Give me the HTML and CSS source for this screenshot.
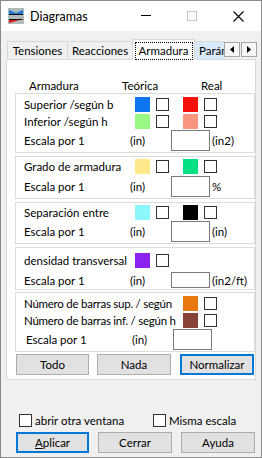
FILE: index.html
```html
<!DOCTYPE html>
<html lang="es">
<head>
  <meta charset="UTF-8"/>
  <title>Diagramas</title>
  <link rel="stylesheet" href="styles.css">
</head>
<body>

  <div class="window">
    <div class="titlebar">
      <svg class="app-icon" width="16" height="16" viewBox="0 0 16 16">
        <rect width="16" height="16" fill="#b1babb"/>
        <path d="M1 2 L8 5 L15 2 L15 6 L1 6 Z" fill="#1f7ad8"/>
        <rect x="1" y="6" width="14" height="1" fill="#111"/>
        <rect x="1" y="11" width="14" height="1" fill="#111"/>
        <path d="M1 12 L12 12 L1 15 Z" fill="#e3191b"/>
        <path d="M13 12 L15 12 L15 11 Z" fill="#e3191b"/>
      </svg>
      <span class="title">Diagramas</span>
      <div class="caption-buttons">
        <span class="cap-btn">
          <svg width="10" height="10" viewBox="0 0 10 10"><rect x="0" y="4" width="10" height="1" fill="#000"/></svg>
        </span>
        <span class="cap-btn">
          <svg width="10" height="10" viewBox="0 0 10 10"><rect x="0.5" y="0.5" width="9" height="9" fill="none" stroke="#c4c4c4"/></svg>
        </span>
        <span class="cap-btn">
          <svg width="11" height="11" viewBox="0 0 11 11"><path d="M0.5 0.5 L10.5 10.5 M10.5 0.5 L0.5 10.5" stroke="#000" stroke-width="1.1"/></svg>
        </span>
      </div>
    </div>

    <div class="client">
      <div class="tabstrip">
        <div class="tabs">
          <div class="tab tab-1">Tensiones</div>
          <div class="tab tab-2">Reacciones</div>
          <div class="tab tab-active"><span class="focus">Armadura</span></div>
          <div class="tab tab-hover">Parámetros</div>
        </div>
        <div class="tab-scroller">
          <span class="scroll-btn">
            <svg width="4" height="7" viewBox="0 0 4 7"><path d="M4 0 L0 3.5 L4 7 Z" fill="#000"/></svg>
          </span>
          <span class="scroll-btn">
            <svg width="4" height="7" viewBox="0 0 4 7"><path d="M0 0 L4 3.5 L0 7 Z" fill="#000"/></svg>
          </span>
        </div>
      </div>

      <div class="panel">
        <div class="panel-head">
          <span>Armadura</span>
          <span>Teórica</span>
          <span>Real</span>
        </div>

        <div class="group group-1">
          <div class="row">
            <span class="label">Superior /según b</span>
            <span class="swatch" style="background:#0b76ef"></span>
            <span class="check"></span>
            <span class="swatch swatch-real" style="background:#f5100c"></span>
            <span class="check"></span>
          </div>
          <div class="row">
            <span class="label">Inferior /según h</span>
            <span class="swatch" style="background:#98f883"></span>
            <span class="check"></span>
            <span class="swatch swatch-real" style="background:#f8957e"></span>
            <span class="check"></span>
          </div>
          <div class="scale-row">
            <span class="scale-label">Escala por 1</span>
            <span class="scale-in">(in)</span>
            <span class="field"></span>
            <span class="unit">(in2)</span>
          </div>
        </div>

        <div class="group group-2">
          <div class="row">
            <span class="label">Grado de armadura</span>
            <span class="swatch" style="background:#fde88e"></span>
            <span class="check"></span>
            <span class="swatch swatch-real" style="background:#04e185"></span>
            <span class="check"></span>
          </div>
          <div class="scale-row">
            <span class="scale-label">Escala por 1</span>
            <span class="scale-in">(in)</span>
            <span class="field"></span>
            <span class="unit">%</span>
          </div>
        </div>

        <div class="group group-3">
          <div class="row">
            <span class="label">Separación entre</span>
            <span class="swatch" style="background:#8cf8fd"></span>
            <span class="check"></span>
            <span class="swatch swatch-real" style="background:#000"></span>
            <span class="check"></span>
          </div>
          <div class="scale-row">
            <span class="scale-label">Escala por 1</span>
            <span class="scale-in">(in)</span>
            <span class="field"></span>
            <span class="unit">(in)</span>
          </div>
        </div>

        <div class="group group-4">
          <div class="row">
            <span class="label">densidad transversal</span>
            <span class="swatch" style="background:#8a22f0"></span>
            <span class="check"></span>
          </div>
          <div class="scale-row">
            <span class="scale-label">Escala por 1</span>
            <span class="scale-in">(in)</span>
            <span class="field"></span>
            <span class="unit">(in2/ft)</span>
          </div>
        </div>

        <div class="group group-5">
          <div class="row">
            <span class="label label-wide">Número de barras sup. / según</span>
            <span class="swatch" style="background:#e8790f"></span>
            <span class="check"></span>
          </div>
          <div class="row">
            <span class="label label-wide">Número de barras inf. / según h</span>
            <span class="swatch" style="background:#874335"></span>
            <span class="check"></span>
          </div>
          <div class="scale-row">
            <span class="scale-label">Escala por 1</span>
            <span class="scale-in">(in)</span>
            <span class="field"></span>
          </div>
        </div>

        <div class="panel-buttons">
          <button class="btn">Todo</button>
          <button class="btn">Nada</button>
          <button class="btn btn-default">Normalizar</button>
        </div>
      </div>

      <div class="options">
        <label class="option"><span class="check"></span>abrir otra ventana</label>
        <label class="option"><span class="check"></span>Misma escala</label>
      </div>

      <div class="actions">
        <button class="btn btn-default"><u>A</u>plicar</button>
        <button class="btn">Cerrar</button>
        <button class="btn">Ayuda</button>
      </div>
    </div>
  </div>

</body>
</html>
```

FILE: styles.css
```css
* {
  box-sizing: border-box;
}

body {
  margin: 0;
  font-family: Lato, "Noto Sans", sans-serif;
  font-size: 11.5px;
  color: #000;
}

.window {
  width: 262px;
  height: 458px;
  border: 1px solid #8a8a8a;
  background: #f0f0f0;
  display: flex;
  flex-direction: column;
}

/* title bar */
.titlebar {
  height: 30px;
  flex-shrink: 0;
  background: #fff;
  display: flex;
  align-items: center;
  padding-left: 7px;
}

.app-icon {
  display: block;
}

.title {
  margin-left: 6px;
  font-size: 12.5px;
}

.caption-buttons {
  margin-left: auto;
  display: flex;
}

.cap-btn {
  width: 46px;
  height: 30px;
  display: flex;
  align-items: center;
  justify-content: center;
}

.cap-btn svg {
  display: block;
}

/* client area */
.client {
  flex: 1;
  display: flex;
  flex-direction: column;
  padding: 8px 5px 4px 5px;
}

.tabstrip {
  position: relative;
  z-index: 1;
  height: 21px;
  margin-bottom: -1px;
}

.tabs {
  width: 219px;
  height: 21px;
  display: flex;
  align-items: flex-end;
  overflow: hidden;
}

.tab {
  flex-shrink: 0;
  height: 18px;
  margin-bottom: 1px;
  margin-left: -1px;
  border: 1px solid #d9d9d9;
  border-bottom: none;
  background: #f0f0f0;
  display: flex;
  align-items: center;
  justify-content: center;
}

.tab-1 {
  width: 61px;
  margin-left: 1px;
}

.tab-2 {
  width: 66px;
}

.tab-active {
  width: 63px;
  height: 21px;
  margin-bottom: 0;
  background: #fff;
}

.focus {
  width: 58px;
  height: 18px;
  margin-top: 1px;
  border: 1px dotted #000;
  display: flex;
  align-items: center;
  justify-content: center;
}

.tab-hover {
  width: 60px;
  justify-content: flex-start;
  padding-left: 4px;
  background: #d8eaf9;
}

.tab-scroller {
  position: absolute;
  left: 218px;
  top: 3px;
  display: flex;
  gap: 1px;
}

.scroll-btn {
  width: 16px;
  height: 15px;
  border: 1px solid #a6a6a6;
  background: #f6f6f6;
  display: flex;
  align-items: center;
  justify-content: center;
}

.scroll-btn svg {
  display: block;
}

/* tab page */
.panel {
  border: 1px solid #d9d9d9;
  background: #fff;
  padding: 0 0 4px 8px;
}

.panel-head {
  height: 33px;
  padding: 19px 0 0 14px;
  display: grid;
  grid-template-columns: 93px 79px auto;
  line-height: 14px;
}

.group {
  border: 1px solid #dcdcdc;
  margin-bottom: 3px;
  padding-left: 8px;
}

.group-1 {
  padding-top: 2px;
  padding-bottom: 1px;
}

.group-2 {
  padding-top: 1px;
  padding-bottom: 1px;
}

.group-2 .scale-row {
  margin-top: 1px;
}

.group-3 {
  padding-top: 1px;
  padding-bottom: 1px;
}

.group-4 {
  padding-top: 4px;
  padding-bottom: 1px;
  margin-bottom: 2px;
}

.group-4 .scale-row {
  height: 16px;
  margin-top: 3px;
}

.group-4 .field {
  height: 16px;
}

.group-5 {
  padding-top: 2px;
  padding-bottom: 1px;
  margin-bottom: 2px;
}

.group-5 .scale-row {
  padding-left: 2px;
}

.row {
  height: 17px;
  display: flex;
  align-items: center;
  white-space: nowrap;
}

.label {
  width: 111px;
  flex-shrink: 0;
}

.label-wide {
  width: 159px;
  letter-spacing: -0.25px;
}

.swatch {
  width: 15px;
  height: 15px;
  flex-shrink: 0;
}

.swatch-real {
  margin-left: 14px;
}

.check {
  width: 13px;
  height: 13px;
  flex-shrink: 0;
  border: 1px solid #333;
  background: #fff;
}

.row .check {
  margin-left: 6px;
}

.scale-row {
  height: 21px;
  display: flex;
  align-items: center;
  white-space: nowrap;
}

.scale-label {
  width: 106px;
}

.scale-in {
  width: 41px;
}

.field {
  width: 39px;
  height: 21px;
  border: 1px solid #7a7a7a;
  background: #fff;
}

.unit {
  margin-left: 2px;
}

/* buttons */
.btn {
  height: 21px;
  width: 74px;
  padding: 0;
  border: 1px solid #adadad;
  background: #e1e1e1;
  font: inherit;
  color: #000;
}

.btn-default {
  border: 2px solid #0078d7;
}

.panel-buttons {
  display: flex;
  padding-left: 1px;
}

.panel-buttons .btn:first-child {
  width: 73px;
  margin-right: 8px;
}

.panel-buttons .btn:nth-child(2) {
  margin-right: 9px;
}

.options {
  margin-top: auto;
  height: 13px;
  display: flex;
  padding-left: 13px;
  margin-bottom: 5px;
}

.option {
  display: flex;
  align-items: center;
  white-space: nowrap;
}

.option:first-child {
  width: 134px;
}

.option .check {
  margin-right: 3px;
}

.actions {
  display: flex;
  gap: 9px;
  padding-left: 10px;
}

.actions .btn:first-child {
  width: 73px;
}
```
